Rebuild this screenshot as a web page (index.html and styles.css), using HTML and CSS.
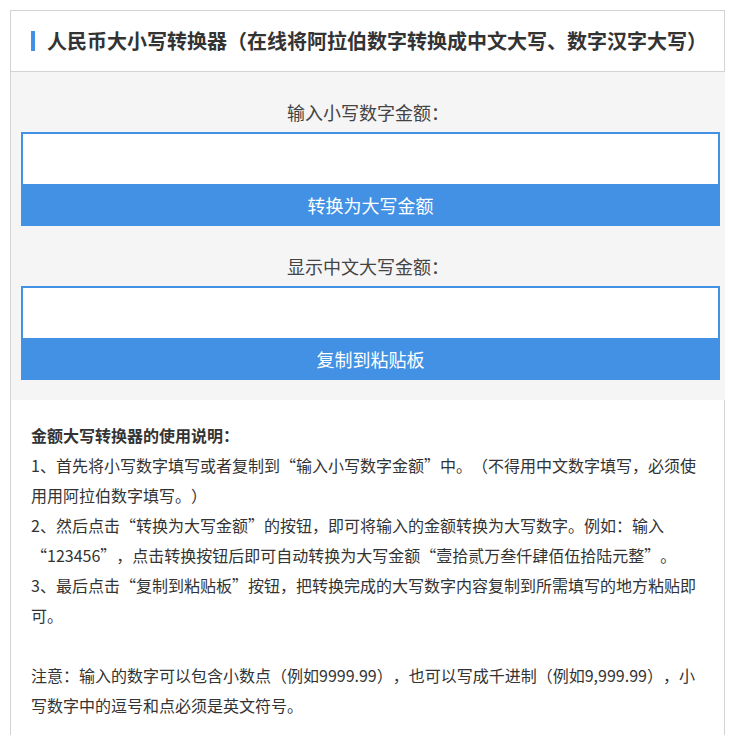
FILE: index.html
```html
<!DOCTYPE html>
<html lang="zh-CN">
<head>
    <meta charset="UTF-8">
    <meta name="viewport" content="width=device-width, initial-scale=1.0">
    <title>人民币大小写转换器</title>
    <link rel="stylesheet" href="styles.css">
</head>
<body>
    <div class="box">
        <div class="box-head">
            <h1>人民币大小写转换器（在线将阿拉伯数字转换成中文大写、数字汉字大写）</h1>
        </div>
        <div class="converter">
            <div class="group">
                <label for="lower">输入小写数字金额：</label>
                <input type="text" id="lower">
                <button class="btn">转换为大写金额</button>
            </div>
            <div class="group">
                <label for="upper">显示中文大写金额：</label>
                <input type="text" id="upper">
                <button class="btn">复制到粘贴板</button>
            </div>
        </div>
        <div class="intro">
            <p class="intro-title">金额大写转换器的使用说明：</p>
            <p>1、首先将小写数字填写或者复制到“输入小写数字金额”中。（不得用中文数字填写，必须使用用阿拉伯数字填写。）</p>
            <p>2、然后点击“转换为大写金额”的按钮，即可将输入的金额转换为大写数字。例如：输入“123456”，点击转换按钮后即可自动转换为大写金额“壹拾贰万叁仟肆佰伍拾陆元整”。</p>
            <p>3、最后点击“复制到粘贴板”按钮，把转换完成的大写数字内容复制到所需填写的地方粘贴即可。</p>
            <br>
            <p>注意：输入的数字可以包含小数点（例如9999.99），也可以写成千进制（例如9,999.99），小写数字中的逗号和点必须是英文符号。</p>
        </div>
    </div>
</body>
</html>
```

FILE: styles.css
```css
body{
    margin: 10px;
    font-family: "Noto Sans CJK SC", sans-serif;
    color: #333;
    background-color: #fff;
    text-spacing-trim: space-all;
}
.box{
    border: 1px solid #d3d3d3;
}
.box-head{
    height: 60px;
    display: flex;
    align-items: center;
    padding-left: 20px;
    border-bottom: 1px solid #d3d3d3;
}
.box-head h1{
    margin: 0;
    font-size: 20px;
    font-weight: bold;
    line-height: 20px;
    color: #333;
    border-left: 4px solid #4291e4;
    padding-left: 12px;
}
.converter{
    background-color: #f5f5f5;
    padding: 20px 0;
    margin-right: -1px;
}
.group + .group{
    margin-top: 20px;
}
.group label{
    display: block;
    text-align: center;
    font-size: 18px;
    line-height: 40px;
    color: #444;
}
.group input{
    display: block;
    box-sizing: border-box;
    width: 699px;
    height: 52px;
    margin-left: 10px;
    border: 2px solid #4291e4;
    border-bottom: none;
    background-color: #fff;
    outline: none;
    font-size: 18px;
    padding: 0 10px;
}
.btn{
    display: block;
    width: 699px;
    height: 42px;
    margin-left: 10px;
    border: none;
    background-color: #4291e4;
    color: #fff;
    font-family: inherit;
    font-size: 18px;
    cursor: pointer;
}
.intro{
    padding: 20px;
    font-size: 16px;
    line-height: 30px;
}
.intro p{
    margin: 0;
}
.intro-title{
    font-weight: bold;
}
```
